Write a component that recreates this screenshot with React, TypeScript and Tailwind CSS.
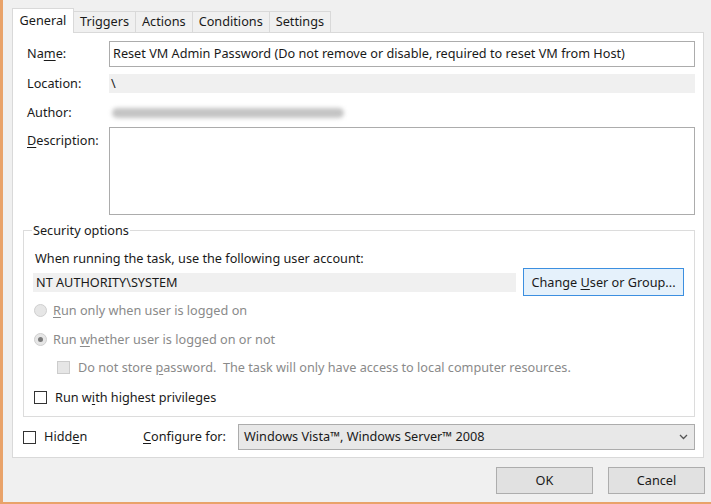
import React from "react";

const font = { fontFamily: '"Segoe UI", "Noto Sans", "Open Sans", sans-serif' };

function U({ children }: { children: React.ReactNode }) {
  return <span className="underline underline-offset-2">{children}</span>;
}

function Radio({ checked }: { checked?: boolean }) {
  return (
    <span className="w-[13px] h-[13px] rounded-full border border-[#cfcfcf] bg-[#e6e6e6] flex items-center justify-center shrink-0">
      {checked && <span className="w-[5px] h-[5px] rounded-full bg-[#7a7a7a]" />}
    </span>
  );
}

function Check({ disabled }: { disabled?: boolean }) {
  return (
    <span
      className={
        disabled
          ? "w-[13px] h-[13px] border border-[#cccccc] bg-[#e6e6e6] shrink-0"
          : "w-[13px] h-[13px] border border-[#333333] bg-white shrink-0"
      }
    />
  );
}

export default function App() {
  const tabs = ["Triggers", "Actions", "Conditions", "Settings"];
  return (
    <div
      className="w-[711px] h-[504px] bg-[#f0f0f0] border-l-[3px] border-b-[2px] border-[#e9a36a] text-[12.7px] text-[#1a1a1a] flex flex-col overflow-hidden"
      style={font}
    >
      {/* tab strip */}
      <div className="flex items-end pl-[9px] pt-[8px] h-[32px]">
        <div className="h-[25px] w-[62px] bg-white border border-b-0 border-[#d9d9d9] flex items-center justify-center relative z-10 mb-[-1px]">
          General
        </div>
        {tabs.map((t) => (
          <div
            key={t}
            className="h-[21px] px-[6px] border border-l-0 border-b-0 border-[#d9d9d9] bg-[#f0f0f0] flex items-center"
          >
            {t}
          </div>
        ))}
      </div>

      {/* page */}
      <div className="ml-[9px] mr-[7px] h-[426px] bg-white border border-[#d9d9d9] flex flex-col pl-[14px] pr-[8px] pt-[8px]">
        <div className="flex items-center h-[26px]">
          <div className="w-[82px]">
            Na<U>m</U>e:
          </div>
          <div className="flex-1 h-[26px] border border-[#acacac] flex items-center px-[3px]">
            Reset VM Admin Password (Do not remove or disable, required to reset VM from Host)
          </div>
        </div>

        <div className="flex items-center h-[19px] mt-[7px]">
          <div className="w-[82px]">Location:</div>
          <div className="flex-1 h-[19px] bg-[#f0f0f0] flex items-center px-[2px]">\</div>
        </div>

        <div className="flex items-center h-[19px] mt-[10px]">
          <div className="w-[82px]">Author:</div>
          <div className="flex-1 h-[19px] flex items-center px-[3px]">
            <span className="block w-[232px] h-[10px] rounded-full bg-[#c4c4c4] blur-[2px]" />
          </div>
        </div>

        <div className="flex items-start mt-[5px]">
          <div className="w-[82px] pt-[4px]">
            <U>D</U>escription:
          </div>
          <div className="flex-1 h-[88px] border border-[#acacac]" />
        </div>

        <fieldset className="mt-[6px] border border-[#dcdcdc] ml-[-4px] pl-[9px] pr-[10px] h-[196px]">
          <legend className="px-[1px] ml-[-1px]">Security options</legend>
          <div className="mt-[9px] ml-[2px]">When running the task, use the following user account:</div>
          <div className="flex items-center mt-[1px]">
            <div className="w-[483px] h-[19px] bg-[#f0f0f0] flex items-center px-[3px]">NT AUTHORITY\SYSTEM</div>
            <div className="ml-[7px] w-[161px] h-[28px] border border-[#3c8fe0] bg-[#e5f1fb] flex items-center justify-center mt-[-1px]">
              <span className="px-[1px]">
                Change <U>U</U>ser or Group...
              </span>
            </div>
          </div>

          <div className="flex items-center gap-[6px] mt-[5px] ml-[1px] text-[#8a8a8a]">
            <Radio />
            <span>
              <U>R</U>un only when user is logged on
            </span>
          </div>
          <div className="flex items-center gap-[6px] mt-[10px] ml-[1px] text-[#8a8a8a]">
            <Radio checked />
            <span>
              Run <U>w</U>hether user is logged on or not
            </span>
          </div>
          <div className="flex items-center gap-[8px] mt-[9px] ml-[24px] text-[#8a8a8a]">
            <Check disabled />
            <span className="whitespace-pre">
              Do not store <U>p</U>assword.  The task will only have access to local computer resources.
            </span>
          </div>
          <div className="flex items-center gap-[8px] mt-[11px] ml-[1px]">
            <Check />
            <span>
              Run w<U>i</U>th highest privileges
            </span>
          </div>
        </fieldset>

        <div className="flex items-center mt-[7px] ml-[-4px]">
          <Check />
          <span className="ml-[8px] w-[99px]">
            Hidd<U>e</U>n
          </span>
          <span className="w-[95px]">
            <U>C</U>onfigure for:
          </span>
          <div className="flex-1 h-[26px] border border-[#acacac] bg-[#e8e8e8] flex items-center pl-[5px] pr-[6px]">
            <span className="flex-1">Windows Vista™, Windows Server™ 2008</span>
            <svg width="9" height="6" viewBox="0 0 9 6" fill="none" stroke="#555" strokeWidth="1.3">
              <path d="M1 1l3.5 3.5L8 1" />
            </svg>
          </div>
        </div>
      </div>

      {/* dialog buttons */}
      <div className="flex justify-end gap-[15px] mr-[6px] mt-[9px]">
        <div className="w-[97px] h-[27px] border border-[#adadad] bg-[#e1e1e1] flex items-center justify-center">OK</div>
        <div className="w-[97px] h-[27px] border border-[#adadad] bg-[#e1e1e1] flex items-center justify-center">Cancel</div>
      </div>
    </div>
  );
}
